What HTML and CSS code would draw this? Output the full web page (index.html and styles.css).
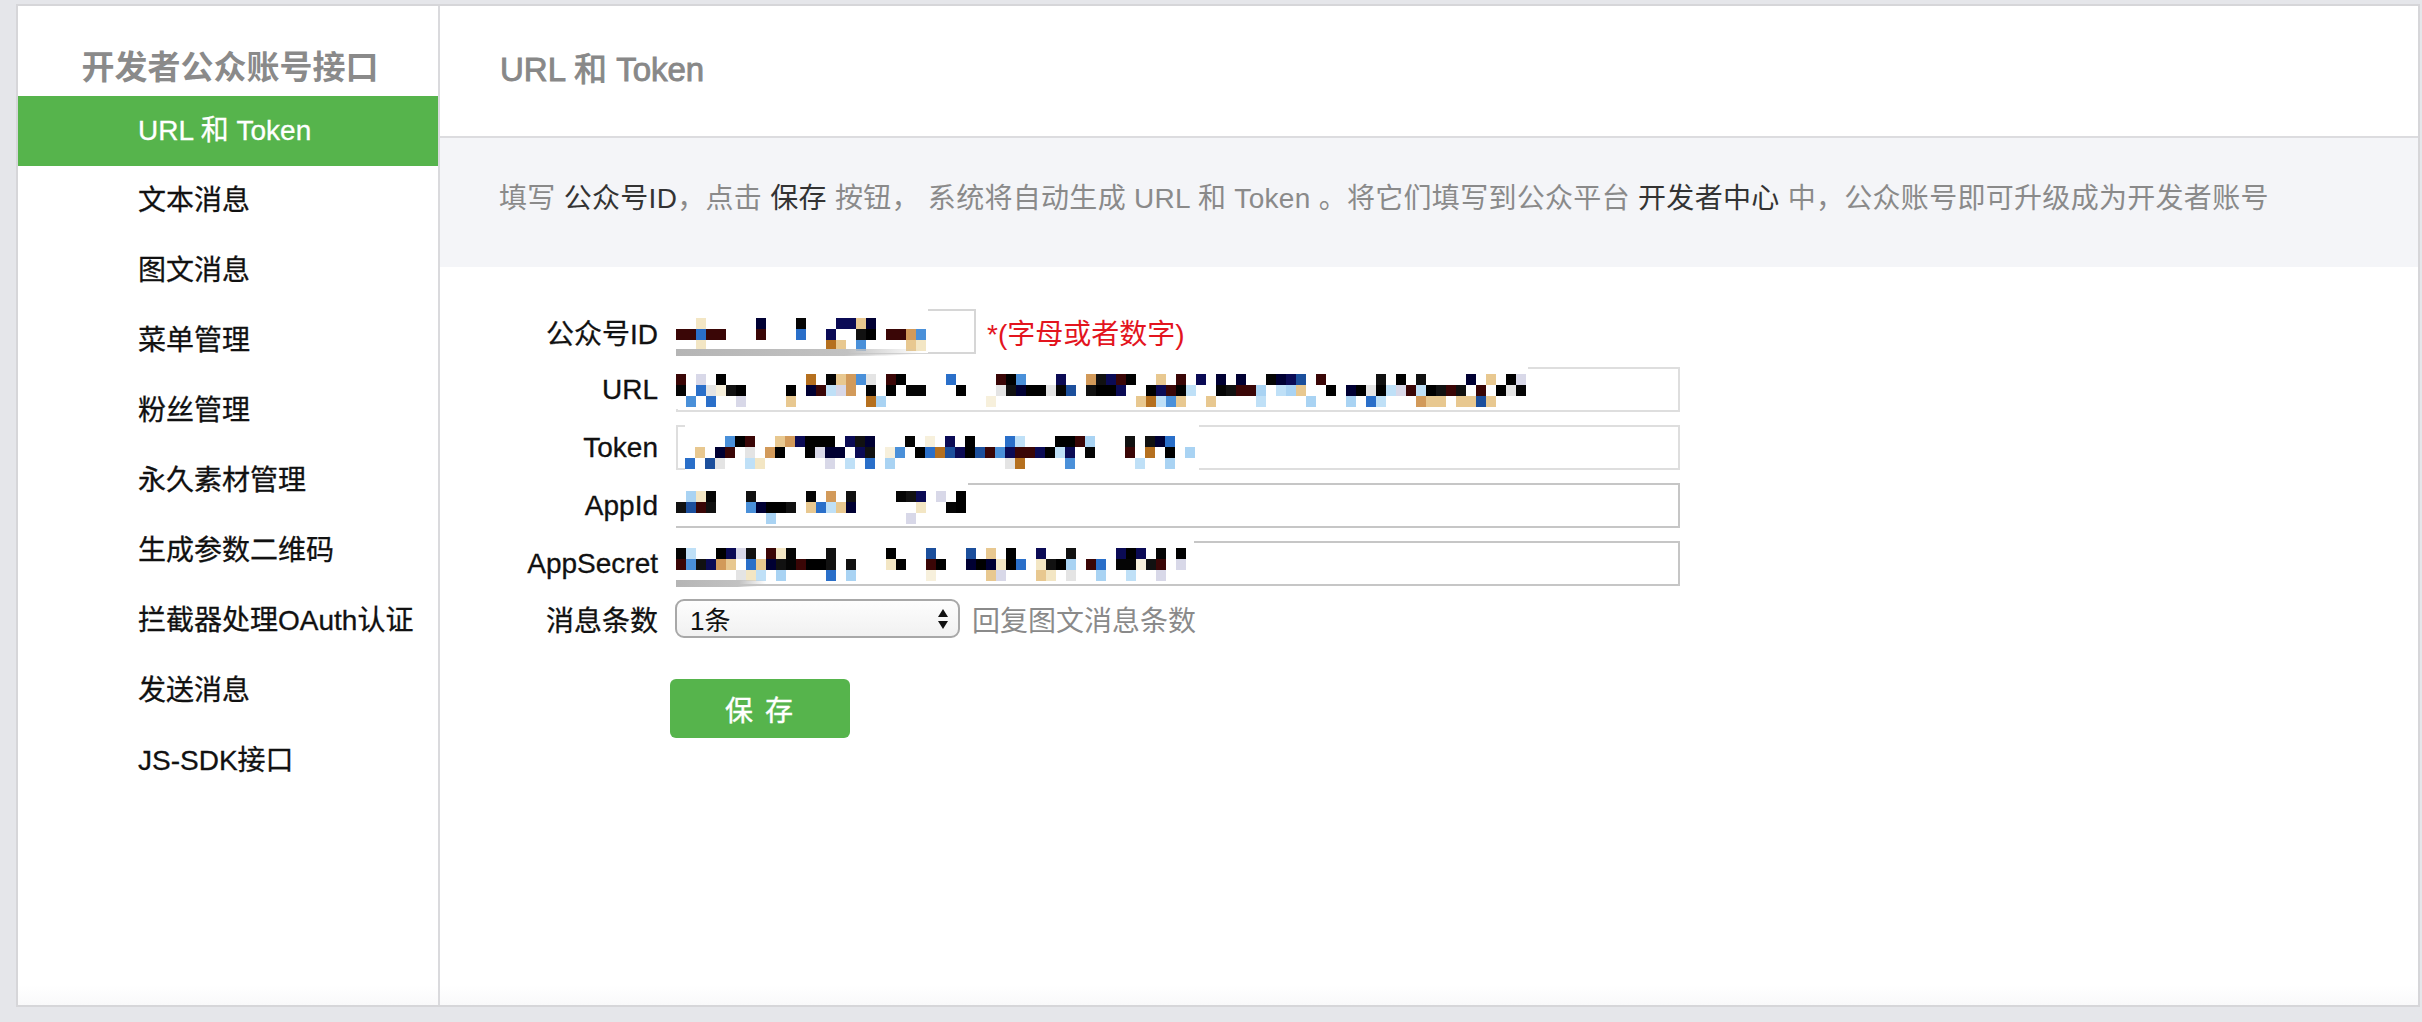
FILE: index.html
```html
<!DOCTYPE html>
<html lang="zh-CN">
<head>
<meta charset="utf-8">
<title>URL 和 Token</title>
<link rel="stylesheet" href="styles.css">
</head>
<body>
<div class="page">
  <div class="frame">
    <aside class="sidebar">
      <div class="side-title">开发者公众账号接口</div>
      <ul class="menu">
        <li class="menu-item active">URL 和 Token</li>
        <li class="menu-item">文本消息</li>
        <li class="menu-item">图文消息</li>
        <li class="menu-item">菜单管理</li>
        <li class="menu-item">粉丝管理</li>
        <li class="menu-item">永久素材管理</li>
        <li class="menu-item">生成参数二维码</li>
        <li class="menu-item">拦截器处理OAuth认证</li>
        <li class="menu-item">发送消息</li>
        <li class="menu-item">JS-SDK接口</li>
      </ul>
    </aside>
    <main class="main">
      <div class="main-header">URL 和 Token</div>
      <div class="notice">填写 <span class="em">公众号ID</span>，点击 <span class="em">保存</span> 按钮， 系统将自动生成 URL 和 Token 。将它们填写到公众平台 <span class="em">开发者中心</span> 中，公众账号即可升级成为开发者账号</div>
      <form class="form">
        <div class="row">
          <label class="label">公众号ID</label>
          <div class="field field-short"><span class="mosaic mosaic-id" data-w="252" data-rows="3" data-seed="11"></span><span class="smear smear-id"></span></div>
          <span class="hint">*(字母或者数字)</span>
        </div>
        <div class="row">
          <label class="label">URL</label>
          <div class="field field-light"><span class="mosaic mosaic-url" data-w="852" data-rows="3" data-seed="23"></span></div>
        </div>
        <div class="row">
          <label class="label">Token</label>
          <div class="field field-light"><span class="mosaic mosaic-token" data-w="514" data-rows="3" data-seed="37"></span></div>
        </div>
        <div class="row">
          <label class="label">AppId</label>
          <div class="field"><span class="mosaic mosaic-appid" data-w="292" data-rows="3" data-seed="41"></span></div>
        </div>
        <div class="row">
          <label class="label">AppSecret</label>
          <div class="field"><span class="mosaic mosaic-secret" data-w="518" data-rows="3" data-seed="59"></span><span class="smear smear-secret"></span></div>
        </div>
        <div class="row row-select">
          <label class="label">消息条数</label>
          <div class="select">
            <span class="select-value">1条</span>
            <svg class="select-arrows" width="12" height="22" viewBox="0 0 12 22"><path d="M6 1 L11 9 L1 9 Z" fill="#111"/><path d="M1 13 L11 13 L6 21 Z" fill="#111"/></svg>
          </div>
          <span class="help">回复图文消息条数</span>
        </div>
        <div class="row-button">
          <button type="button" class="btn-save">保 存</button>
        </div>
      </form>
    </main>
  </div>
</div>
<script src="script.js"></script>
</body>
</html>
```

FILE: styles.css
```css
* { box-sizing: border-box; }
html, body { margin: 0; padding: 0; }
body {
  background: #e5e6ea;
  font-family: "Liberation Sans", "Noto Sans CJK SC", sans-serif;
  color: #1a1a1a;
}
.page {
  height: 1022px;
  padding: 4px 2px 15px 16px;
}
.frame {
  height: 100%;
  display: flex;
  border: 2px solid #d6d6d9;
  background: linear-gradient(to bottom, #ffffff calc(100% - 20px), #f9f9fa);
}
.sidebar {
  width: 422px;
  flex: none;
  border-right: 2px solid #dadadd;
}
.side-title {
  padding: 40px 0 6px;
  line-height: 44px;
  height: 90px;
  text-align: center;
  font-size: 33px;
  font-weight: bold;
  color: #8a8a8a;
  padding-left: 4px;
}
.menu {
  list-style: none;
  margin: 0;
  padding: 0;
}
.menu-item {
  height: 70px;
  line-height: 70px;
  padding-left: 120px;
  font-size: 28px;
  color: #111111;
  -webkit-text-stroke: 0.3px currentColor;
}
.menu-item.active {
  background: #56b44c;
  color: #ffffff;
}
.main {
  flex: 1;
  min-width: 0;
}
.main-header {
  height: 132px;
  line-height: 128px;
  padding-left: 60px;
  font-size: 33px;
  color: #888888;
  -webkit-text-stroke: 0.9px currentColor;
  border-bottom: 2px solid #dcdcdf;
}
.notice {
  height: 129px;
  background: #f4f5f8;
  padding: 44px 0 0 59px;
  line-height: 34px;
  font-size: 28px;
  letter-spacing: 0.3px;
  color: #8a8a8a;
  white-space: nowrap;
}
.notice .em { color: #333333; }
.form {
  padding-top: 42px;
}
.row {
  display: flex;
  align-items: center;
  height: 45px;
  margin-bottom: 13px;
}
.label {
  width: 218px;
  flex: none;
  text-align: right;
  font-size: 28px;
  color: #111111;
  margin-right: 18px;
  white-space: nowrap;
  -webkit-text-stroke: 0.3px currentColor;
}
.field {
  position: relative;
  width: 1004px;
  height: 45px;
  border: 2px solid #c6c6c6;
  background: #fff;
}
.field-light { border-color: #dedede; }
.field-short { width: 300px; border-color: #d6d6d6; }
.mosaic {
  position: absolute;
  display: block;
  background: #fff;
  left: -2px;
  top: -2px;
}
.mosaic svg { display: block; }
.mosaic-id { padding-top: 9px; padding-bottom: 2px; }
.mosaic-url { padding-top: 7px; padding-bottom: 2px; }
.mosaic-token { left: 7px; padding-top: 11px; padding-bottom: 4px; }
.mosaic-appid { padding-top: 8px; padding-bottom: 2px; }
.mosaic-secret { padding-top: 7px; padding-bottom: 2px; }
.smear {
  position: absolute;
  display: block;
  height: 7px;
  border-radius: 0 0 40% 0;
  background: linear-gradient(to right, #b5b5b5, #c2c2c2 70%, rgba(200,200,200,0));
}
.smear-id { left: -2px; top: 38px; width: 245px; }
.smear-secret { left: -2px; top: 37px; width: 90px; }
.hint {
  margin-left: 11px;
  font-size: 28px;
  color: #e3141e;
  white-space: nowrap;
}
.row-select {
  height: 39px;
  margin-top: 12px;
  margin-bottom: 0;
}
.select {
  width: 285px;
  height: 39px;
  border: 2px solid #a8a8a8;
  border-radius: 9px;
  background: linear-gradient(to bottom, #fdfdfd, #f1f1f1);
  display: flex;
  align-items: center;
  justify-content: space-between;
  padding: 0 9px 0 13px;
  margin-left: -1px;
}
.select-value {
  font-size: 26px;
  color: #111;
}
.select-arrows { display: block; }
.help {
  margin-left: 12px;
  font-size: 28px;
  color: #8a8a8a;
  white-space: nowrap;
}
.row-button {
  margin-top: 41px;
  padding-left: 230px;
}
.btn-save {
  width: 180px;
  height: 59px;
  border: none;
  border-radius: 6px;
  background: #56b44c;
  color: #ffffff;
  font-family: "Liberation Sans", "Noto Sans CJK SC", sans-serif;
  font-size: 28px;
  letter-spacing: 2px;
  padding: 0;
  -webkit-text-stroke: 0.4px currentColor;
}
```

FILE: script.js
```javascript
(function () {
  function rng(seed) {
    var a = seed >>> 0;
    return function () {
      a = (a + 0x6D2B79F5) >>> 0;
      var t = a;
      t = Math.imul(t ^ (t >>> 15), t | 1);
      t ^= t + Math.imul(t ^ (t >>> 7), t | 61);
      return ((t ^ (t >>> 14)) >>> 0) / 4294967296;
    };
  }
  var dark = ["#000000", "#050505", "#0b0b55", "#111111", "#3a0606", "#000033", "#000000"];
  var mid = ["#2a6fc9", "#4a90d9", "#b5701f", "#d29a5a", "#1c4f9c"];
  var light = ["#bfe0f7", "#e4e4e4", "#f3e6c4", "#a9d3f3", "#e8c890", "#d8d8e8", "#f7f0dc"];
  function pick(r, arr) { return arr[Math.floor(r() * arr.length)]; }
  var ns = "http://www.w3.org/2000/svg";
  var els = document.querySelectorAll(".mosaic");
  for (var i = 0; i < els.length; i++) {
    var el = els[i];
    var w = +el.getAttribute("data-w");
    var rows = +el.getAttribute("data-rows");
    var r = rng(+el.getAttribute("data-seed"));
    var cw = 10, ch = 11;
    var cols = Math.floor(w / cw);
    var svg = document.createElementNS(ns, "svg");
    svg.setAttribute("width", w);
    svg.setAttribute("height", rows * ch);
    var gap = 0;
    for (var c = 0; c < cols; c++) {
      if (gap > 0) { gap--; continue; }
      if (c > 2 && r() < 0.06) { gap = 1 + Math.floor(r() * 2); continue; }
      for (var y = 0; y < rows; y++) {
        var p = y === 0 ? 0.5 : (y === 1 ? 0.78 : 0.25);
        if (r() > p) continue;
        var q = r(), col;
        if (y === 2) col = q < 0.7 ? pick(r, light) : pick(r, mid);
        else if (q < 0.68) col = pick(r, dark);
        else if (q < 0.84) col = pick(r, mid);
        else col = pick(r, light);
        var rect = document.createElementNS(ns, "rect");
        rect.setAttribute("x", c * cw);
        rect.setAttribute("y", y * ch);
        rect.setAttribute("width", cw);
        rect.setAttribute("height", ch);
        rect.setAttribute("fill", col);
        svg.appendChild(rect);
      }
    }
    el.appendChild(svg);
  }
})();
```
